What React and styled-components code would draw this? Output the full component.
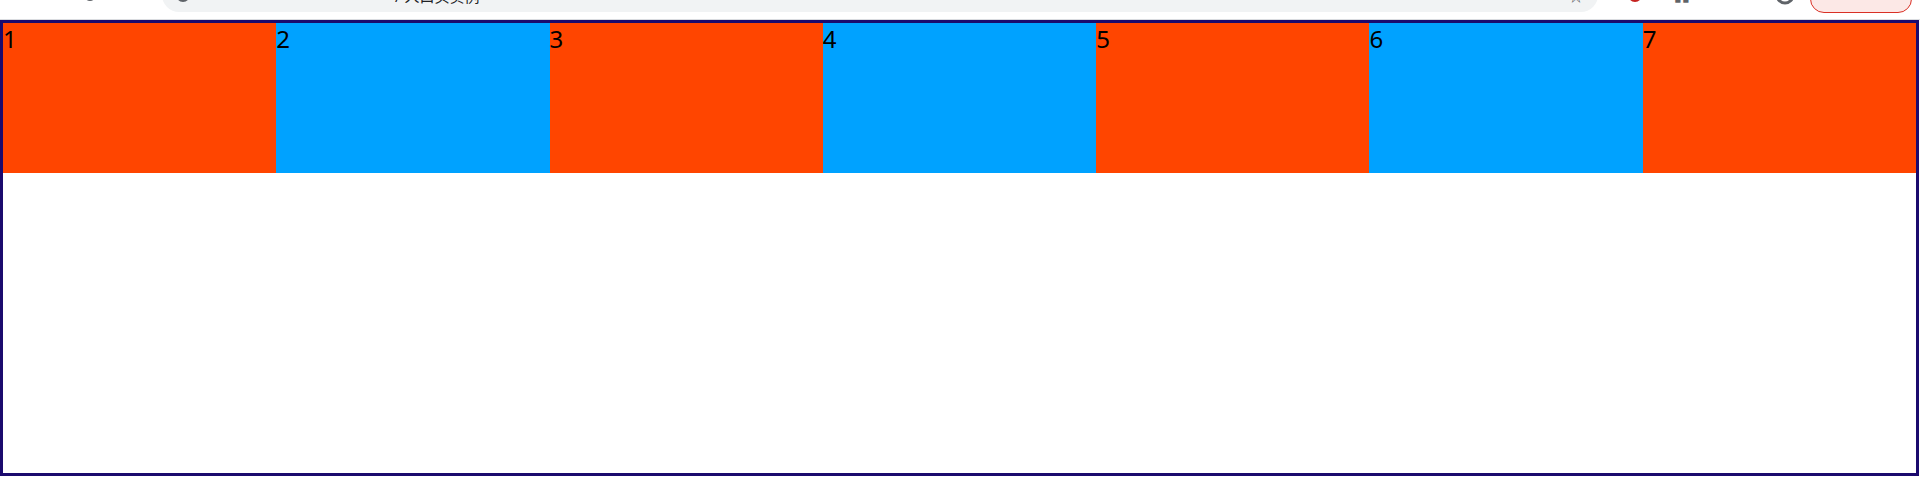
import React from "react";
import styled, { createGlobalStyle } from "styled-components";

const Global = createGlobalStyle`
  html, body { margin: 0; padding: 0; background: #fff; }
  body { font-family: "Noto Sans", "Noto Sans CJK SC", sans-serif; }
`;

const Chrome = styled.div`
  height: 19px;
  border-bottom: 1px solid #dadce0;
  overflow: hidden;
  background: #fff;
`;

const ChromeRow = styled.div`
  height: 34px;
  margin-top: -22px;
  display: flex;
  align-items: center;
  padding: 0 8px 0 22px;
  gap: 14px;
`;

const ToolGroup = styled.div`
  display: flex;
  align-items: center;
  gap: 28px;
  flex: none;
`;

const NavIcon = styled.span`
  width: ${(p) => p.$w || 16}px;
  height: 16px;
  display: inline-flex;
  align-items: center;
  justify-content: center;
  color: #5f6368;
  font-size: 14px;
  flex: none;
`;

const Omnibox = styled.div`
  flex: 1;
  height: 34px;
  border-radius: 17px;
  background: #f1f3f4;
  margin: 0 16px 0 50px;
  display: flex;
  align-items: center;
  padding: 0 14px;
  gap: 10px;
  font-size: 15px;
  color: #5f6368;
`;

const Dot = styled.span`
  width: 14px;
  height: 14px;
  border-radius: 50%;
  background: ${(p) => p.$c};
  flex: none;
`;

const UrlText = styled.span`
  margin-left: 195px;
  flex: 1;
  color: #202124;
`;

const Pill = styled.div`
  width: 100px;
  height: 28px;
  border: 1px solid #d93025;
  background: #fce8e6;
  border-radius: 14px;
  flex: none;
  margin-top: 6px;
  margin-left: -14px;
`;

const Flex = styled.div`
  width: 1919px;
  height: 456px;
  box-sizing: border-box;
  border: 3px solid #1b0a6e;
  display: flex;
  align-items: flex-start;
`;

const Item = styled.div`
  flex: 1;
  height: 150px;
  background: ${(p) => (p.$odd ? "#ff4500" : "#00a2ff")};
  font-size: 24px;
  line-height: 32px;
  color: #000;
`;

export default function App() {
  const items = [1, 2, 3, 4, 5, 6, 7];
  return (
    <>
      <Global />
      <Chrome>
        <ChromeRow>
          <NavIcon>←</NavIcon>
          <NavIcon>→</NavIcon>
          <NavIcon>
            <svg width="14" height="14" viewBox="0 0 14 14">
              <circle cx="7" cy="7" r="5" fill="none" stroke="#5f6368" strokeWidth="2" />
            </svg>
          </NavIcon>
          <Omnibox>
            <Dot $c="#5f6368" />
            <UrlText>/ 人口头实例</UrlText>
            <NavIcon>☆</NavIcon>
          </Omnibox>
          <ToolGroup>
            <Dot $c="#c5221f" />
            <NavIcon $w={24}>▮▮</NavIcon>
            <NavIcon $w={24}>•</NavIcon>
            <NavIcon $w={22}>
              <svg width="22" height="22" viewBox="0 0 22 22">
                <circle cx="11" cy="11" r="8" fill="none" stroke="#5f6368" strokeWidth="3" />
              </svg>
            </NavIcon>
            <Pill />
          </ToolGroup>
        </ChromeRow>
      </Chrome>
      <Flex>
        {items.map((n) => (
          <Item key={n} $odd={n % 2 === 1}>
            {n}
          </Item>
        ))}
      </Flex>
    </>
  );
}
